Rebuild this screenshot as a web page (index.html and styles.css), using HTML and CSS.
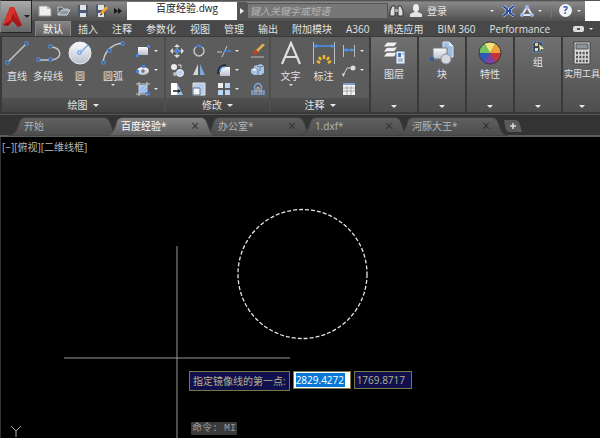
FILE: index.html
```
<!DOCTYPE html>
<html lang="zh-CN">
<head>
    <meta charset="UTF-8">
    <meta name="viewport" content="width=device-width, initial-scale=1.0">
    <title>百度经验.dwg</title>
    <link rel="stylesheet" href="styles.css">
</head>
<body>
    <svg class="defs" aria-hidden="true">
        <defs>
            <linearGradient id="metal" x1="0" y1="0" x2="0" y2="1"><stop offset="0" stop-color="#fafbfd"/><stop offset="1" stop-color="#b9bfcd"/></linearGradient>
            <linearGradient id="tab-on" x1="0" y1="0" x2="0" y2="1"><stop offset="0" stop-color="#858585"/><stop offset="1" stop-color="#5c5c5c"/></linearGradient>
            <linearGradient id="tab-off" x1="0" y1="0" x2="0" y2="1"><stop offset="0" stop-color="#606060"/><stop offset="1" stop-color="#4b4b4b"/></linearGradient>
            <path id="tab-shape" d="M0 19C7 18 9 13 11 7C12 2 14 .5 19 .5H95C100 .5 101 3 103 8C105 14 106 18 112 19Z"/>
        </defs>
    </svg>

    <header class="top">
        <button class="app-button" aria-label="应用程序菜单">
            <svg width="19" height="20" viewBox="0 0 19 20"><path d="M7 0H11L19 18L15 20L10 14L5 19L0 18Z" fill="#c41f1f"/><path d="M7 0L11 0L12 10L0 18Z" fill="#d8332b"/><path d="M8 12L10 6L12 12L10 14Z" fill="#a01417"/><path d="M0 18L9 13L5 19Z" fill="#991518"/><path d="M12 10L19 18L15 20L9 13Z" fill="#a8181a"/></svg>
            <span class="caret dark"></span>
        </button>

        <div class="title-bar">
            <nav class="quick">
                <button aria-label="新建"><svg width="14" height="12" viewBox="0 0 14 12"><path d="M1 1H9L13 4V11H1Z" fill="#eee" stroke="#999"/><path d="M9 1V4H13" fill="#bbb"/></svg></button>
                <button aria-label="打开"><svg width="14" height="12" viewBox="0 0 14 12"><path d="M1 10V2H5L7 4H11V6" fill="#667" stroke="#bcc4cc"/><path d="M1 10L5 5H13L10 10Z" fill="#8997a3" stroke="#d6dde3"/></svg></button>
                <button aria-label="保存"><svg width="14" height="12" viewBox="0 0 14 12"><path d="M2 0H12V12H2Z" fill="#4b5970"/><path d="M4 0H10V5H4ZM4 8H10V12H4Z" fill="#dfe3e8"/></svg></button>
                <button aria-label="另存为"><svg width="14" height="12" viewBox="0 0 14 12"><path d="M1 0H11V12H1Z" fill="#4b5970"/><path d="M3 0H9V5H3ZM3 8H9V12H3Z" fill="#dfe3e8"/><path d="M6 9L12 2" stroke="#f0a52e" stroke-width="3"/><path d="M5 10L7 9" stroke="#222"/></svg></button>
                <button aria-label="更多"><svg width="8" height="6" viewBox="0 0 8 6"><path d="M0 0L4 3L0 6ZM4 0L8 3L4 6Z" fill="#151515"/></svg></button>
            </nav>
            <div class="file-name">百度经验.dwg</div>
            <button class="search-toggle" aria-label="搜索"><svg width="4" height="6"><path d="M0 0L4 3L0 6Z" fill="#eee"/></svg></button>
            <input class="search" type="text" aria-label="搜索" placeholder="键入关键字或短语">
            <div class="account">
                <button aria-label="查找"><svg width="15" height="14" viewBox="0 0 15 14"><path d="M3 2H6V12H1V7ZM9 2H12L14 7V12H9Z" fill="#ddd" stroke="#333"/><path d="M6 5H9V8H6Z" fill="#aaa"/></svg></button>
                <button class="login"><svg width="12" height="13" viewBox="0 0 12 13"><ellipse cx="6" cy="4" rx="3" ry="4" fill="#eee"/><path d="M0 13V10L4 8H8L12 10V13Z" fill="#e4e4e4"/></svg>登录</button>
                <span class="caret login-caret"></span>
                <button aria-label="交换"><svg width="13" height="12" viewBox="0 0 13 12"><path d="M1 1L5 4V8L1 11M12 1L8 4V8L12 11" fill="none" stroke="#d7e0f5" stroke-width="3"/><path d="M1 1L5 4V8L1 11M12 1L8 4V8L12 11M4 6H9" fill="none" stroke="#2b4c9c" stroke-width="2"/></svg></button>
                <button class="a360" aria-label="A360"><svg width="14" height="12" viewBox="0 0 14 12"><path d="M7 2L2 10H12Z" fill="none" stroke="#dce6f5" stroke-width="2"/><circle cx="7" cy="2" r="2" fill="#9bb7e4"/><circle cx="2" cy="10" r="2" fill="#9bb7e4"/><circle cx="12" cy="10" r="2" fill="#9bb7e4"/></svg><span class="caret"></span></button>
                <button class="help" aria-label="帮助"><span class="help-mark">?</span><span class="caret"></span></button>
            </div>
            <div class="window-end"></div>
        </div>

        <nav class="ribbon-tabs">
            <button class="active">默认</button>
            <button>插入</button>
            <button>注释</button>
            <button>参数化</button>
            <button>视图</button>
            <button>管理</button>
            <button>输出</button>
            <button>附加模块</button>
            <button>A360</button>
            <button>精选应用</button>
            <button>BIM 360</button>
            <button>Performance</button>
            <button class="minimize" aria-label="最小化功能区"><span class="pill"></span><span class="caret"></span></button>
        </nav>
    </header>

    <main class="ribbon">
        <section class="panel draw">
            <div class="tools">
                <button class="tool"><svg width="24" height="24" viewBox="0 0 24 24"><path d="M2 22L22 2" stroke="#c6c6c6" stroke-width="1.5"/><path d="M1 20H4V23H1ZM20 1H23V4H20Z" fill="#334c78" stroke="#5d94e0"/></svg>直线</button>
                <button class="tool"><svg width="26" height="24" viewBox="0 0 26 24"><path d="M3 19H17C28 18 27 6 16 6" fill="none" stroke="#c6c6c6" stroke-width="1.5"/><path d="M2 17H5V20H2ZM14 17H17V20H14ZM14 4H17V7H14Z" fill="#334c78" stroke="#5d94e0"/></svg>多段线</button>
                <button class="tool"><svg width="24" height="24" viewBox="0 0 24 24"><circle cx="12" cy="12" r="11" fill="url(#metal)" stroke="#e4e7ee"/><path d="M12 12L20 4" stroke="#77adf0" stroke-width="1.5"/><path d="M10 10H13V13H10Z" fill="#d8e8ff" stroke="#5d94e0"/></svg>圆<span class="caret"></span></button>
                <button class="tool"><svg width="24" height="24" viewBox="0 0 24 24"><path d="M2 22C3 11 10 3 22 2" fill="none" stroke="#c6c6c6" stroke-width="1.5"/><path d="M1 20H4V23H1ZM7 8H10V11H7ZM20 1H23V4H20Z" fill="#334c78" stroke="#5d94e0"/></svg>圆弧<span class="caret"></span></button>
                <div class="small-tools">
                    <button aria-label="矩形"><svg width="14" height="14" viewBox="0 0 14 14"><path d="M2 3H12V11H2Z" fill="url(#metal)"/><path d="M0 10H3V13H0ZM11 1H14V4H11Z" fill="#4a83d8"/></svg><span class="caret"></span></button>
                    <button aria-label="椭圆"><svg width="14" height="14" viewBox="0 0 14 14"><ellipse cx="7" cy="8" rx="6" ry="4" fill="url(#metal)"/><path d="M6 2H9V5H6ZM0 7H3V10H0Z" fill="#4a83d8"/><path d="M7 6V10M5 8H9" stroke="#555"/></svg><span class="caret"></span></button>
                    <button aria-label="图案填充"><svg width="14" height="14" viewBox="0 0 14 14"><path d="M3 3H11V11H3Z" fill="#a9c9f3"/><path d="M3 0V14M11 0V14M0 2H14M0 12H14" stroke="#ccc"/><path d="M4 9L9 4M6 11L11 6" stroke="#7ea6dc"/><path d="M9 11H14M12 9V14" stroke="#3978d6" stroke-width="1.5"/></svg><span class="caret"></span></button>
                </div>
            </div>
            <button class="panel-title">绘图<span class="caret big"></span></button>
        </section>

        <section class="panel modify">
            <div class="tools">
                <button aria-label="移动"><svg width="14" height="14" viewBox="0 0 14 14"><path d="M7 0L10 3H4ZM7 14L10 11H4ZM0 7L3 4V10ZM14 7L11 4V10Z" fill="#ddd"/><path d="M7 3V11M3 7H11" stroke="#bbb"/><path d="M5 5H9V9H5Z" fill="#4a83d8"/></svg></button>
                <button aria-label="旋转"><svg width="14" height="14" viewBox="0 0 14 14"><path d="M4 3A5 5 0 1 0 10 3" fill="none" stroke="#c5c5c5" stroke-width="1.5"/><path d="M4 3C6 1 8 1 9 3" fill="none" stroke="#4a83d8" stroke-width="2"/></svg></button>
                <button aria-label="修剪"><svg width="14" height="14" viewBox="0 0 14 14"><path d="M0 8H5M10 2L5 13" stroke="#c5c5c5"/><path d="M7 7H14" stroke="#4a8fe8" stroke-width="1.5" stroke-dasharray="3 1"/></svg><span class="caret"></span></button>
                <button aria-label="删除"><svg width="14" height="14" viewBox="0 0 14 14"><path d="M6 7L13 0" stroke="#e8b04a" stroke-width="2.5"/><path d="M3 10L6 7" stroke="#c4421c" stroke-width="4"/><path d="M0 13H13" stroke="#bbb"/></svg></button>

                <button aria-label="复制"><svg width="14" height="14" viewBox="0 0 14 14"><circle cx="4" cy="4" r="3" fill="#ececec"/><circle cx="10" cy="10" r="3.5" fill="#b9d3f5" stroke="#eee"/><circle cx="5" cy="11" r="2" fill="#bbb"/><path d="M8 2H11V5" fill="none" stroke="#ddd"/></svg></button>
                <button aria-label="镜像"><svg width="14" height="14" viewBox="0 0 14 14"><path d="M6 1V12H1Z" fill="#d3d6dd"/><path d="M8 1V12H13Z" fill="#7fa6d9"/></svg></button>
                <button aria-label="圆角"><svg width="14" height="14" viewBox="0 0 14 14"><path d="M3 13V9Q3 4 8 4H13V13Z" fill="url(#metal)"/><path d="M1 11Q1 2 9 2" fill="none" stroke="#222" stroke-width="1.5"/><path d="M3 9Q3 4 8 4" fill="none" stroke="#65a2f0" stroke-width="1.5"/></svg><span class="caret"></span></button>
                <button aria-label="分解"><svg width="14" height="14" viewBox="0 0 14 14"><path d="M3 3L10 1L13 3V10L10 12H3L0 10V6L3 5Z" fill="#a9c3e3"/><path d="M0 6L4 5L7 7V12M6 3L9 4L13 3M9 4V8" fill="none" stroke="#66809f"/><path d="M1 6L4 5L6 7L3 8Z" fill="#eef3fa"/></svg></button>

                <button aria-label="拉伸"><svg width="14" height="14" viewBox="0 0 14 14"><path d="M1 1H7V13H1Z" fill="#fff"/><path d="M7 1L13 13H7Z" fill="#9cc3f2"/><path d="M3 9H9" stroke="#222" stroke-width="1.5"/><path d="M8 7L11 9L8 11Z" fill="#222"/></svg></button>
                <button aria-label="缩放"><svg width="14" height="14" viewBox="0 0 14 14"><path d="M1 1H13V13H1Z" fill="#b7cdec" stroke="#e6e6e6"/><path d="M1 6H8V13H1Z" fill="#f5f5f5" stroke="#5b7394"/></svg></button>
                <button aria-label="阵列"><svg width="14" height="14" viewBox="0 0 14 14"><path d="M1 1H6V6H1Z" fill="#eee"/><path d="M8 1H13V6H8ZM1 8H6V13H1ZM8 8H13V13H8Z" fill="#b8d5fa"/></svg><span class="caret"></span></button>
                <button aria-label="偏移"><svg width="14" height="14" viewBox="0 0 14 14"><path d="M1 12V9H4V7A3.5 3.5 0 1 1 10 7V9H13V12Z" fill="none" stroke="#7fa4d6" stroke-width="1.5"/><path d="M3 10H6V6A1 1 0 1 1 8 6V10H11" fill="none" stroke="#ccc"/></svg></button>
            </div>
            <button class="panel-title">修改<span class="caret big"></span></button>
        </section>

        <section class="panel annotate">
            <div class="tools">
                <button class="tool"><svg width="24" height="24" viewBox="0 0 24 24"><path d="M3 23L12 2L21 23M6 16H18" fill="none" stroke="#dedede" stroke-width="2.2"/></svg>文字<span class="caret"></span></button>
                <button class="tool"><svg width="24" height="24" viewBox="0 0 24 24"><path d="M1.500 1V23M22.500 1V23" stroke="#bdbdbd"/><path d="M2 5H22" stroke="#4b94f0" stroke-width="1.5"/><path d="M1 5L5 3V7ZM23 5L19 3V7Z" fill="#4b94f0"/><path d="M12 18V14M9 19L7 16M15 19L17 16M8 22L5 20M16 22L19 20" stroke="#f1b62c" stroke-width="2.500"/></svg>标注</button>
                <div class="small-tools">
                    <button aria-label="线性"><svg width="14" height="14" viewBox="0 0 14 14"><path d="M1.500 1V13M12.500 1V13" stroke="#bbb"/><path d="M2 6H12" stroke="#4b94f0" stroke-width="1.5"/><path d="M2 6L5 4V8ZM12 6L9 4V8Z" fill="#4b94f0"/></svg><span class="caret"></span></button>
                    <button aria-label="引线"><svg width="14" height="14" viewBox="0 0 14 14"><path d="M1 13L5 5H10" fill="none" stroke="#ccc"/><circle cx="11" cy="5" r="2.5" fill="#ddd"/><path d="M0 10L3 11L1 14Z" fill="#ddd"/></svg><span class="caret"></span></button>
                    <button aria-label="表格"><svg width="14" height="14" viewBox="0 0 14 14"><path d="M1 2H13V13H1Z" fill="#f2f2f2"/><path d="M1 2H13" stroke="#7d9cc8" stroke-width="2"/><path d="M1 6H13M1 9H13M5 4V13M9 4V13" stroke="#a5a9b0"/></svg></button>
                </div>
            </div>
            <button class="panel-title">注释<span class="caret big"></span></button>
        </section>

        <button class="panel single">
            <svg width="24" height="24" viewBox="0 0 24 24"><path d="M5 1H16L12 6H1ZM5 6H16L12 11H1ZM5 11H16L12 16H1Z" fill="#efefef" stroke="#666"/><path d="M14 10H23V23H14Z" fill="#eee" stroke="#596a80"/><path d="M16 12H19V16H16Z" fill="#3c73c4"/><path d="M16 18H21M16 20H21M20 13H22" stroke="#6e8cb5"/></svg>图层<span class="caret big"></span>
        </button>
        <button class="panel single">
            <svg width="24" height="24" viewBox="0 0 24 24"><path d="M13 1H19L23 5V16H13Z" fill="#9dbde3" stroke="#d6e5f7"/><path d="M19 1V5H23" fill="#e8f1fb"/><path d="M3 7H17V18H3Z" fill="url(#metal)" stroke="#777"/><circle cx="16" cy="18" r="5" fill="#d5d8de" stroke="#8b8f97"/><path d="M0 16H4V20H0Z" fill="#395d96"/></svg>块<span class="caret big"></span>
        </button>
        <button class="panel single">
            <svg width="24" height="24" viewBox="0 0 24 24"><path d="M12 12L6.500 2.500A11 11 0 0 1 17.500 2.500Z" fill="#f1e27c"/><path d="M12 12L17.500 2.500A11 11 0 0 1 23 12Z" fill="#eea03a"/><path d="M12 12H23A11 11 0 0 1 17.500 21.500Z" fill="#c63535"/><path d="M12 12L17.500 21.500A11 11 0 0 1 6.500 21.500Z" fill="#7a40a6"/><path d="M12 12L6.500 21.500A11 11 0 0 1 1 12Z" fill="#3257b5"/><path d="M12 12H1A11 11 0 0 1 6.500 2.500Z" fill="#75c35d"/><circle cx="12" cy="12" r="11" fill="none" stroke="#3c3c3c"/></svg>特性<span class="caret big"></span>
        </button>
        <button class="panel single">
            <svg width="12" height="12" viewBox="0 0 12 12"><path d="M1 1H10V11H1Z" fill="#3a4252" stroke="#5d94e0" stroke-dasharray="2 1"/><path d="M3 2H6V5H3Z" fill="#e5d27a"/><path d="M3 7H6V10H3Z" fill="#ddd"/><path d="M7 3L12 8H9L8 11Z" fill="#f0e89c"/></svg>组<span class="caret big"></span>
        </button>
        <button class="panel single last">
            <svg width="24" height="24" viewBox="0 0 24 24"><path d="M4 1H20V23H4Z" fill="#d9d9d9" stroke="#444"/><path d="M6 3H18V8H6Z" fill="#8a949b" stroke="#555"/><path d="M6 12H18M6 16H18M6 20H18" stroke="#555" stroke-width="2.500" stroke-dasharray="2 1.300"/></svg>实用工具<span class="caret big"></span>
        </button>
    </main>

    <nav class="file-tabs">
        <button class="file-tab"><svg width="112" height="19"><use href="#tab-shape"/></svg><span>开始</span></button>
        <button class="file-tab active"><svg width="112" height="19"><use href="#tab-shape"/></svg><span>百度经验*</span><i class="close">×</i></button>
        <button class="file-tab"><svg width="112" height="19"><use href="#tab-shape"/></svg><span>办公室*</span><i class="close">×</i></button>
        <button class="file-tab"><svg width="112" height="19"><use href="#tab-shape"/></svg><span>1.dxf*</span><i class="close">×</i></button>
        <button class="file-tab"><svg width="112" height="19"><use href="#tab-shape"/></svg><span>河豚大王*</span><i class="close">×</i></button>
        <button class="new-tab" aria-label="新图形"><svg width="18" height="12" viewBox="0 0 18 12"><path d="M0 0H11Q15 0 16 5L18 12H6Q2 12 1 6Z" fill="#5a5a5a"/><path d="M9 3V9M6 6H12" stroke="#ddd" stroke-width="1.5"/></svg></button>
    </nav>

    <div class="canvas">
        <div class="view-label">[−][俯视][二维线框]</div>
        <svg class="drawing" aria-hidden="true">
            <circle cx="302.5" cy="137" r="64.5" fill="none" stroke="#e6e6e6" stroke-width="1.3" stroke-dasharray="4 2"/>
            <path d="M64 221H290" stroke="#9a9a9a"/>
            <path d="M177 109V2000" stroke="#9a9a9a"/>
        </svg>
        <div class="prompt">
            <label for="coord-x">指定镜像线的第一点:</label>
            <div class="coord current"><input id="coord-x" type="text" value="2829.4272"></div>
            <div class="coord"><input type="text" aria-label="Y" value="1769.8717"></div>
        </div>
        <div class="command">命令: MI</div>
        <svg class="axis" width="12" height="12" aria-hidden="true"><path d="M1 1L6 6L11 1M6 6V12" fill="none" stroke="#aaa"/></svg>
    </div>
</body>
</html>
```
FILE: styles.css
```
* { box-sizing: border-box; }
body {
    margin: 0;
    min-height: 100vh;
    display: flex;
    flex-direction: column;
    background: #000;
    color: #e2e2e2;
    font: 10px/14px "Open Sans", "Noto Sans CJK SC", sans-serif;
    overflow-x: hidden;
}
button {
    display: flex;
    align-items: center;
    justify-content: center;
    margin: 0;
    padding: 0;
    border: none;
    background: none;
    color: inherit;
    font: inherit;
    white-space: nowrap;
}
input { font: inherit; border: none; border-radius: 0; outline: none; padding: 0; }
svg { display: block; flex: none; }
.defs { position: absolute; width: 0; height: 0; }

.caret {
    flex: none;
    border: 2px solid transparent;
    border-top-color: #e8e8e8;
    border-bottom-width: 0;
}
.caret.big { border-width: 3px 3px 0; }
.caret.dark { border-width: 3px 3px 0; border-top-color: #222; }

/* title bar and ribbon tabs */
.top {
    display: grid;
    grid-template-columns: 32px 1fr;
    grid-template-rows: 21px 15px;
    background: #484848;
}
.app-button {
    grid-row: 1 / 3;
    height: 33px;
    gap: 2px;
    border: 1px solid #262626;
    border-left-color: #888;
    background: linear-gradient(#a9a9a9, #666);
}
.title-bar {
    display: flex;
    align-items: center;
    min-width: 0;
    background: linear-gradient(#444 0, #888 10%, #505050 100%);
}
.quick {
    display: flex;
    align-items: center;
    gap: 5px;
    width: 95px;
    padding-left: 6px;
}
.file-name {
    width: 110px;
    height: 18px;
    padding-left: 10px;
    background: #fff;
    color: #222;
    text-align: center;
    line-height: 12px;
}
.search-toggle { width: 10px; height: 18px; background: #555; }
.search {
    width: 141px;
    height: 16px;
    padding-left: 2px;
    border: 1px solid #555;
    background: #777;
}
.search::placeholder { color: #b4b4b4; font-style: italic; }
.account {
    flex: 1;
    display: flex;
    align-items: center;
    padding-left: 1px;
}
.login { gap: 5px; margin-left: 6px; }
.login-caret { margin: 0 8px 0 auto; }
.a360 { gap: 4px; margin: 0 9px 0 5px; }
.help { gap: 5px; padding: 0 4px 0 7px; border-left: 1px solid #777; }
.help-mark {
    width: 13px;
    height: 13px;
    border-radius: 50%;
    background: #f2f4f8;
    color: #234fa8;
    font-weight: bold;
    line-height: 13px;
}
.window-end { width: 15px; height: 20px; background: #fff; }
.ribbon-tabs { display: flex; padding-left: 3px; }
.ribbon-tabs button { padding: 0 7px; }
.ribbon-tabs .active {
    border: 1px solid #888;
    border-bottom: none;
    background: linear-gradient(#858585, #606060);
    color: #fff;
}
.ribbon-tabs .minimize { gap: 5px; margin-left: auto; }
.pill {
    width: 11px;
    height: 6px;
    border: 2px solid #ddd;
    border-width: 2px 4px;
    border-radius: 2px;
    background: #555;
}

/* ribbon panels */
.ribbon {
    display: flex;
    gap: 2px;
    height: 78px;
    padding: 1px 0 2px 2px;
    background: #3a3a3a;
    overflow: hidden;
}
.panel {
    flex: none;
    display: flex;
    flex-direction: column;
    background: #5c5c5c;
}
.draw, .modify { box-shadow: 2px 0 0 #4e4e4e; }
.tools { flex: 1; display: grid; padding-top: 4px; }
.draw .tools { grid-template-columns: 30px 32px 32px 34px 34px; }
.modify .tools { grid-template-columns: 22px 22px 36px 23px; grid-auto-rows: 19px; }
.annotate .tools { grid-template-columns: 39px 27px 32px; }
.modify button, .small-tools button { gap: 4px; }
.tool { flex-direction: column; justify-content: flex-start; }
.tool svg { margin-bottom: 4px; }
.tool .caret { margin-top: 1px; }
.small-tools { display: grid; grid-auto-rows: 19px; justify-content: center; }
.small-tools button { justify-content: flex-start; }
.panel .panel-title { height: 14px; gap: 5px; background: linear-gradient(#505050, #444); }
.single {
    width: 46px;
    align-items: center;
    justify-content: flex-start;
    padding: 4px 0;
    background: linear-gradient(#707070, #4e4e4e);
}
.single svg { margin-bottom: 2px; }
.single .caret { margin-top: auto; }
.single.last { flex: 1 0 38px; font-size: 9px; }

/* open drawings */
.file-tabs {
    display: flex;
    height: 23px;
    padding: 2px 0 0 8px;
    background: #333;
    border-top: 1px solid #555;
    border-bottom: 2px solid #5c5c5c;
}
.file-tab {
    position: relative;
    width: 112px;
    height: 18px;
    margin-right: -15px;
    padding: 0 18px 0 16px;
    justify-content: space-between;
    color: #b5b5b5;
}
.file-tab svg { position: absolute; left: 0; top: 0; fill: url(#tab-off); stroke: #404040; }
.file-tab span, .close { position: relative; }
.file-tab.active { z-index: 1; color: #fff; }
.file-tab.active svg { fill: url(#tab-on); }
.close { color: #303030; font-size: 14px; font-style: normal; }
.new-tab { margin-left: 11px; }

/* drawing area */
.canvas {
    position: relative;
    flex: 1;
    min-height: 301px;
    overflow: hidden;
    border-left: 1px solid #333;
}
.view-label { padding: 3px 1px; color: #b8b8b8; }
.drawing { position: absolute; left: -1px; top: 0; width: 100%; height: 100%; }
.prompt {
    position: absolute;
    left: 188px;
    top: 234px;
    display: flex;
    align-items: flex-start;
    gap: 3px;
}
.prompt label {
    height: 20px;
    padding: 2px 3px;
    border: 1px solid #77774a;
    background: #10104e;
    color: #b5b58a;
    white-space: nowrap;
}
.coord {
    width: 58px;
    height: 18px;
    padding: 1px 2px;
    border: 1px solid #77774a;
    background: #10104e;
}
.coord input { display: block; width: 49px; height: 14px; background: none; color: #b5b58a; }
.coord.current { background: #fff; }
.coord.current input { background: #0878d7; color: #fff; }
.command {
    position: absolute;
    left: 190px;
    bottom: 3px;
    padding: 0 1px;
    border-radius: 1px;
    background: #3a3a3a;
    color: #999;
    font-family: "Liberation Mono", "Noto Sans CJK SC", monospace;
    line-height: 13px;
}
.axis { position: absolute; left: 9px; bottom: 1px; }
```
